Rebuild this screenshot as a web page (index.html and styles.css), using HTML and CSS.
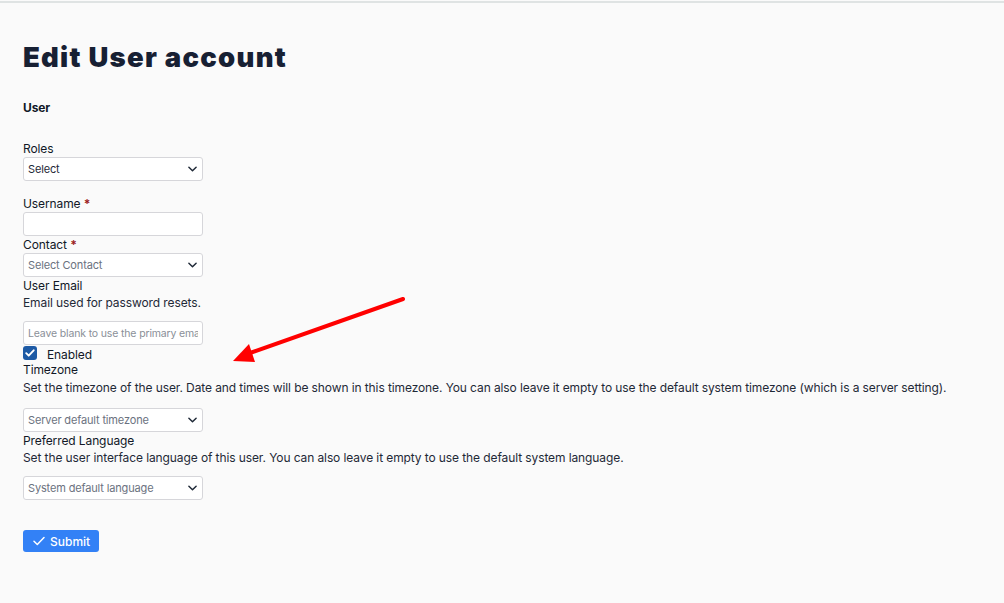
FILE: index.html
```html
<!DOCTYPE html>
<html>
<head>
<meta charset="utf-8">
<link rel="stylesheet" href="styles.css">
</head>
<body>
<div class="topbar"></div>
<main class="page">
  <h1 class="title">Edit User account</h1>
  <div class="section-title">User</div>
  <form class="form">
    <div class="field field-roles">
      <label class="label">Roles</label>
      <div class="select-wrap">
        <select class="control select"><option>Select</option></select>
        <svg class="chev" viewBox="0 0 10 6" width="9" height="6"><path d="M1 1l4 4 4-4" fill="none" stroke="#1f2937" stroke-width="1.6" stroke-linecap="round" stroke-linejoin="round"/></svg>
      </div>
    </div>
    <div class="field field-username">
      <label class="label">Username <span class="req">*</span></label>
      <input class="control input" type="text">
    </div>
    <div class="field">
      <label class="label">Contact <span class="req">*</span></label>
      <div class="select-wrap">
        <select class="control select muted"><option>Select Contact</option></select>
        <svg class="chev" viewBox="0 0 10 6" width="9" height="6"><path d="M1 1l4 4 4-4" fill="none" stroke="#1f2937" stroke-width="1.6" stroke-linecap="round" stroke-linejoin="round"/></svg>
      </div>
    </div>
    <div class="field">
      <label class="label">User Email</label>
      <p class="help">Email used for password resets.</p>
      <input class="control input" type="text" placeholder="Leave blank to use the primary email of the contact">
    </div>
    <div class="check-row">
      <span class="checkbox"><svg viewBox="0 0 14 14" width="14" height="14"><path d="M3.2 7.2l2.5 2.5 5-5.4" fill="none" stroke="#fff" stroke-width="1.9" stroke-linecap="round" stroke-linejoin="round"/></svg></span>
      <span class="check-label">Enabled</span>
    </div>
    <div class="field">
      <label class="label">Timezone</label>
      <p class="help help-tz">Set the timezone of the user. Date and times will be shown in this timezone. You can also leave it empty to use the default system timezone (which is a server setting).</p>
      <div class="select-wrap">
        <select class="control select muted"><option>Server default timezone</option></select>
        <svg class="chev" viewBox="0 0 10 6" width="9" height="6"><path d="M1 1l4 4 4-4" fill="none" stroke="#1f2937" stroke-width="1.6" stroke-linecap="round" stroke-linejoin="round"/></svg>
      </div>
    </div>
    <div class="field">
      <label class="label">Preferred Language</label>
      <p class="help">Set the user interface language of this user. You can also leave it empty to use the default system language.</p>
      <div class="select-wrap">
        <select class="control select muted"><option>System default language</option></select>
        <svg class="chev" viewBox="0 0 10 6" width="9" height="6"><path d="M1 1l4 4 4-4" fill="none" stroke="#1f2937" stroke-width="1.6" stroke-linecap="round" stroke-linejoin="round"/></svg>
      </div>
    </div>
    <div class="actions">
      <button type="button" class="btn">
        <svg viewBox="0 0 12 10" width="12" height="10"><path d="M1 5.2l3.3 3.3L11 1.5" fill="none" stroke="#fff" stroke-width="1.5" stroke-linecap="round" stroke-linejoin="round"/></svg>
        <span>Submit</span>
      </button>
    </div>
  </form>
  <svg class="arrow" width="1004" height="603" viewBox="0 0 1004 603">
    <line x1="403" y1="299" x2="250" y2="353" stroke="#ff0000" stroke-width="4" stroke-linecap="round"/>
    <polygon points="233,361 249,344 255,362" fill="#ff0000"/>
  </svg>
</main>
</body>
</html>
```
FILE: styles.css
```css
* { box-sizing: border-box; }
html, body { margin: 0; padding: 0; }
body {
  background: #fafafa;
  font-family: Inter, "Noto Sans", "Liberation Sans", sans-serif;
  font-size: 12px;
  color: #111827;
  letter-spacing: -0.1px;
  width: 1004px;
  height: 603px;
  overflow: hidden;
}
.topbar {
  height: 2px;
  margin-top: 1px;
  background: #dfe3e3;
}
.page {
  padding: 0 23px;
}
.title {
  margin: 37px 0 0;
  font-size: 27.5px;
  line-height: 34px;
  font-weight: 900;
  color: #172033;
  letter-spacing: 1.25px;
}
.section-title {
  margin-top: 25px;
  font-weight: 700;
  font-size: 12px;
  line-height: 17px;
  color: #111827;
}
.form {
  display: flex;
  flex-direction: column;
  margin-top: 24px;
}
.field {
  display: flex;
  flex-direction: column;
  align-items: flex-start;
}
.field-roles { margin-bottom: 14px; }
.label {
  font-size: 12px;
  line-height: 17px;
  color: #111827;
}
.req { color: #9b1c1c; font-weight: 700; }
.help {
  margin: 0 0 10px;
  font-size: 12px;
  line-height: 17px;
  color: #1f2937;
}
.help-tz { margin-bottom: 12px; margin-top: 1px; }
.control {
  width: 180px;
  height: 24px;
  border: 1px solid #d6d6da;
  border-radius: 3px;
  background: #fff;
  font-family: Inter, "Noto Sans", "Liberation Sans", sans-serif;
  font-size: 11px;
  letter-spacing: -0.15px;
  padding: 0 4px;
  color: #1f2937;
  margin: 0;
}
.input::placeholder { color: #8a8f98; font-size: 10.5px; }
.select-wrap { position: relative; width: 180px; height: 24px; }
.select {
  appearance: none;
  -webkit-appearance: none;
  display: block;
}
.select.muted { color: #6b7280; }
.chev {
  position: absolute;
  right: 6px;
  top: 9px;
  pointer-events: none;
}
.check-row {
  display: flex;
  align-items: center;
  height: 16px;
}
.checkbox {
  width: 14px;
  height: 14px;
  border-radius: 3px;
  background: #1d5aa5;
  display: flex;
  align-items: center;
  justify-content: center;
  margin-top: -1px;
}
.check-label {
  margin-left: 10px;
  line-height: 17px;
  padding-top: 2px;
}
.actions {
  margin-top: 30px;
}
.btn {
  display: inline-flex;
  align-items: center;
  gap: 5px;
  height: 22px;
  width: 76px;
  padding: 0 0 0 10px;
  border: none;
  border-radius: 3px;
  background: #3381f6;
  color: #fff;
  font-family: Inter, "Noto Sans", "Liberation Sans", sans-serif;
  font-size: 12px;
  font-weight: 500;
}
.arrow {
  position: absolute;
  left: 0;
  top: 0;
  pointer-events: none;
}
```
